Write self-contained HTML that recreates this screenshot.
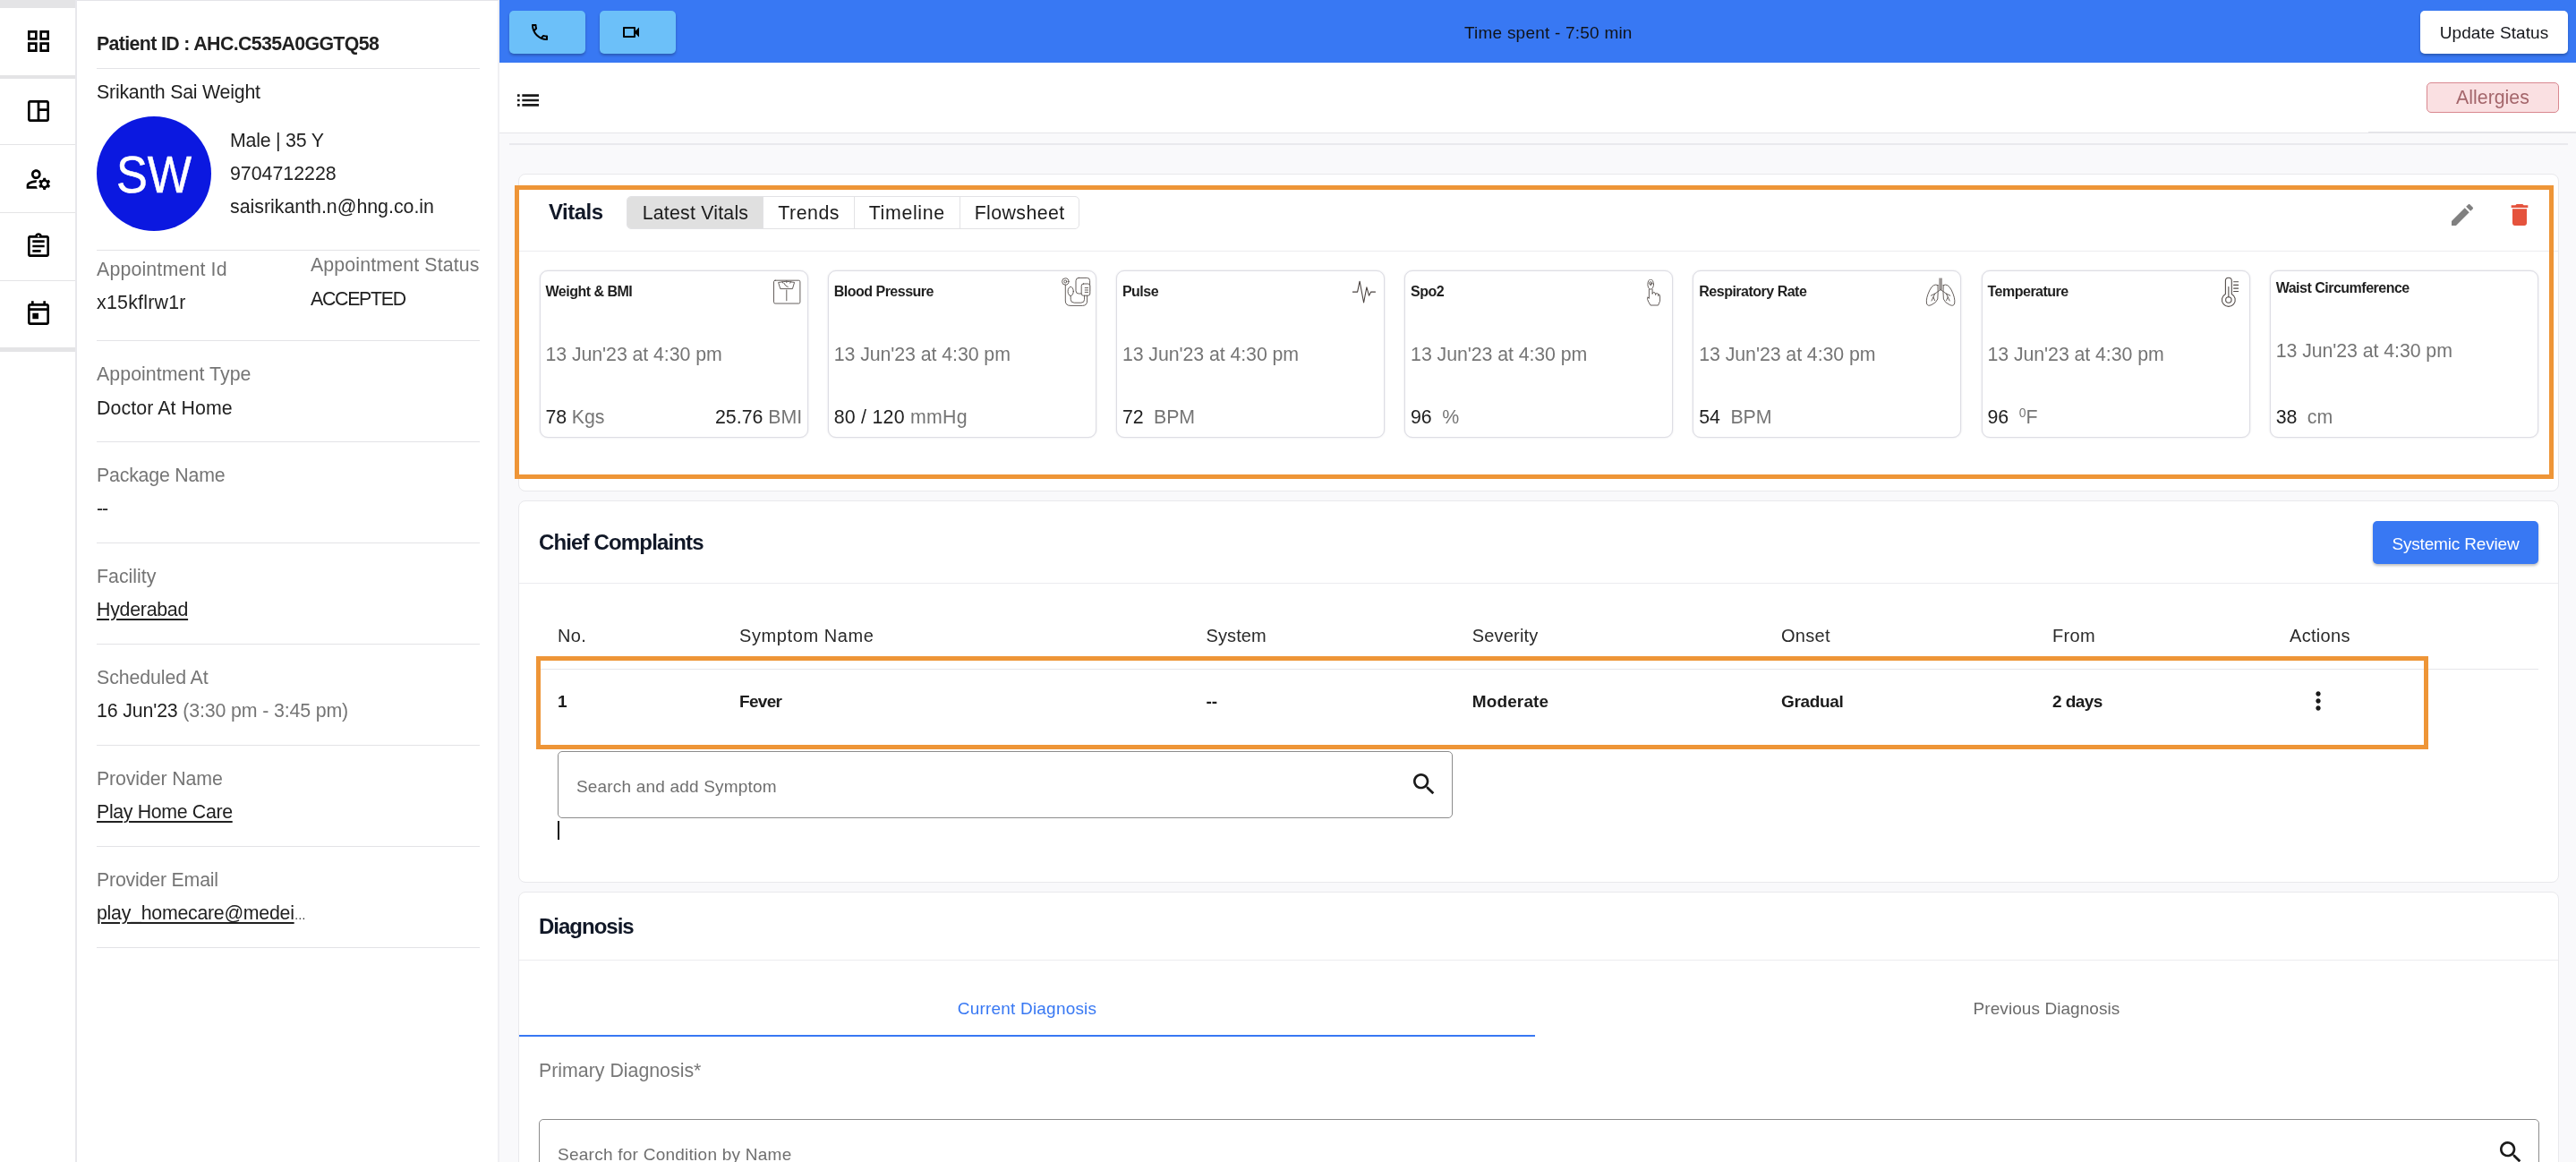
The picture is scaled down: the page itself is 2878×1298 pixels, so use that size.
<!DOCTYPE html>
<html>
<head>
<meta charset="utf-8">
<title>Consultation</title>
<style>
*{box-sizing:border-box;margin:0;padding:0}
html,body{width:2878px;height:1298px;overflow:hidden;background:#fff}
body{font-family:"Liberation Sans",sans-serif;color:#212121;position:relative}
#app{position:absolute;left:0;top:0;width:2878px;height:1298px;overflow:hidden;will-change:transform;background:#fff}
.abs{position:absolute}
.t{position:absolute;white-space:nowrap;line-height:1;font-size:21.33px}
.g{color:#757575}
.u{text-decoration:underline;text-decoration-thickness:1.5px;text-underline-offset:3px}
svg{position:absolute;display:block}
#rail{position:absolute;left:0;top:0;width:86px;height:1298px;background:#fff;border-right:2px solid #e8e8ec}
#rail .band{position:absolute;left:0;width:84px;background:#e4e4e6}
#rail .ln{position:absolute;left:0;width:84px;height:1px;background:#e4e4e6}
#panel{position:absolute;left:86px;top:0;width:472px;height:1298px;background:#fff;border-right:2px solid #f0f0f3;border-top:1px solid #e4e4e8}
.sep{position:absolute;left:108px;width:428px;height:1px;background:#e3e3e6}
#topbar{position:absolute;left:558px;top:0;width:2320px;height:70px;background:#3878f3}
.lb{position:absolute;top:12px;width:85px;height:48px;background:#6cc0f9;border-radius:5px;box-shadow:0 2px 3px rgba(0,0,0,.25)}
#toolbar{position:absolute;left:558px;top:70px;width:2320px;height:79px;background:#fff;border-bottom:1px solid #e6e6e9}
#content{position:absolute;left:558px;top:149px;width:2320px;height:1149px;background:#f9f9fb}
.card{position:absolute;background:#fff;border:1px solid #e9e9ec;border-radius:8px}
.hl{position:absolute;border:5px solid #ee9537}
.vc{position:absolute;top:302px;width:300px;height:187px;background:#fff;border:1.5px solid #dddde4;border-radius:9px;box-shadow:0 0 2px rgba(60,60,90,.18)}
.hr{position:absolute;height:1px;background:#ececef}
</style>
</head>
<body>
<div id="app">
<div id="rail">
<div class="band" style="top:0;height:9px"></div>
<div class="band" style="top:84px;height:4px"></div>
<div class="ln" style="top:161px"></div>
<div class="ln" style="top:237px"></div>
<div class="ln" style="top:313px"></div>
<div class="band" style="top:388px;height:5px"></div>
</div>
<svg style="left:26.7px;top:30px" width="32" height="32" viewBox="0 0 24 24" fill="#000"><path d="M3 3v8h8V3H3zm6 6H5V5h4v4zm-6 4v8h8v-8H3zm6 6H5v-4h4v4zm4-16v8h8V3h-8zm6 6h-4V5h4v4zm-6 4v8h8v-8h-8zm6 6h-4v-4h4v4z"/></svg>
<svg style="left:26.7px;top:108px" width="32" height="32" viewBox="0 0 24 24" fill="#000"><path d="M19 3H5c-1.1 0-2 .9-2 2v14c0 1.1.9 2 2 2h14c1.1 0 2-.9 2-2V5c0-1.1-.9-2-2-2zM5 19V5h6v14H5zm14 0h-6v-7h6v7zm0-9h-6V5h6v5z"/></svg>
<svg style="left:26.7px;top:184px" width="32" height="32" viewBox="0 0 24 24" fill="#000"><path d="M4 18v-.65c0-.34.16-.66.41-.81C6.1 15.53 8.03 15 10 15c.03 0 .05 0 .08.01.1-.7.3-1.37.59-1.98-.22-.02-.44-.03-.67-.03-2.42 0-4.68.67-6.61 1.82-.88.52-1.39 1.5-1.39 2.53V20h9.26c-.42-.6-.75-1.28-.97-2H4zM10 12c2.21 0 4-1.79 4-4s-1.79-4-4-4-4 1.79-4 4 1.79 4 4 4zm0-6c1.1 0 2 .9 2 2s-.9 2-2 2-2-.9-2-2 .9-2 2-2zM20.75 16c0-.22-.03-.42-.06-.63l1.14-1.01-1-1.73-1.45.49c-.32-.27-.68-.48-1.08-.63L18 11h-2l-.3 1.49c-.4.15-.76.36-1.08.63l-1.45-.49-1 1.73 1.14 1.01c-.03.21-.06.41-.06.63s.03.42.06.63l-1.14 1.01 1 1.73 1.45-.49c.32.27.68.48 1.08.63L16 21h2l.3-1.49c.4-.15.76-.36 1.08-.63l1.45.49 1-1.73-1.14-1.01c.03-.21.06-.41.06-.63zM17 18c-1.1 0-2-.9-2-2s.9-2 2-2 2 .9 2 2-.9 2-2 2z"/></svg>
<svg style="left:26.7px;top:259px" width="32" height="32" viewBox="0 0 24 24" fill="#000"><path d="M7 15h7v2H7zm0-4h10v2H7zm0-4h10v2H7zm12-4h-4.18C14.4 1.84 13.3 1 12 1c-1.3 0-2.4.84-2.82 2H5c-.14 0-.27.01-.4.04-.39.08-.74.28-1.01.55-.18.18-.33.4-.43.64-.1.23-.16.49-.16.77v14c0 .27.06.54.16.78s.25.45.43.64c.27.27.62.47 1.01.55.13.02.26.03.4.03h14c1.1 0 2-.9 2-2V5c0-1.1-.9-2-2-2zm-7-.25c.41 0 .75.34.75.75s-.34.75-.75.75-.75-.34-.75-.75.34-.75.75-.75zM19 19H5V5h14v14z"/></svg>
<svg style="left:26.7px;top:335px" width="32" height="32" viewBox="0 0 24 24" fill="#000"><path d="M19 3h-1V1h-2v2H8V1H6v2H5c-1.11 0-1.99.9-1.99 2L3 19c0 1.1.89 2 2 2h14c1.1 0 2-.9 2-2V5c0-1.1-.9-2-2-2zm0 16H5V9h14v10zm0-12H5V5h14v2zM7 11h5v5H7z"/></svg>
<div id="panel"></div>
<div class="t" style="left:108px;top:39px;letter-spacing:-0.63px;font-weight:700;">Patient ID : AHC.C535A0GGTQ58</div>
<div class="sep" style="top:76px"></div>
<div class="t" style="left:108px;top:93px;letter-spacing:-0.22px;">Srikanth Sai Weight</div>
<div class="abs" style="left:108px;top:130px;width:128px;height:128px;border-radius:50%;background:#0b18e0"></div>
<div class="t" style="left:108px;top:165.7px;font-size:58px;color:#fff;width:128px;text-align:center;transform:scaleX(.9);transform-origin:50% 50%;-webkit-text-stroke:.5px #fff;">SW</div>
<div class="t" style="left:257px;top:147px;letter-spacing:-0.22px;">Male | 35 Y</div>
<div class="t" style="left:257px;top:184px;">9704712228</div>
<div class="t" style="left:257px;top:221px;">saisrikanth.n@hng.co.in</div>
<div class="sep" style="top:279px"></div>
<div class="t g" style="left:108px;top:291px;letter-spacing:0.16px;">Appointment Id</div>
<div class="t" style="left:108px;top:328px;letter-spacing:0.25px;">x15kflrw1r</div>
<div class="t g" style="left:347px;top:286px;letter-spacing:0.14px;">Appointment Status</div>
<div class="t" style="left:347px;top:324px;letter-spacing:-1.3px;">ACCEPTED</div>
<div class="sep" style="top:380px"></div>
<div class="t g" style="left:108px;top:408px;letter-spacing:0.06px;">Appointment Type</div>
<div class="t" style="left:108px;top:446px;letter-spacing:0.09px;">Doctor At Home</div>
<div class="sep" style="top:493px"></div>
<div class="t g" style="left:108px;top:521px;letter-spacing:-0.2px;">Package Name</div>
<div class="t" style="left:108px;top:558px;letter-spacing:-1.2px;">--</div>
<div class="sep" style="top:606px"></div>
<div class="t g" style="left:108px;top:634px;letter-spacing:0px;">Facility</div>
<div class="t" style="left:108px;top:671px;letter-spacing:-0.25px;"><span class="u">Hyderabad</span></div>
<div class="sep" style="top:719px"></div>
<div class="t g" style="left:108px;top:747px;letter-spacing:-0.1px;">Scheduled At</div>
<div class="t" style="left:108px;top:784px;letter-spacing:-0.14px;">16 Jun'23 <span class="g">(3:30 pm - 3:45 pm)</span></div>
<div class="sep" style="top:832px"></div>
<div class="t g" style="left:108px;top:860px;letter-spacing:-0.12px;">Provider Name</div>
<div class="t" style="left:108px;top:897px;letter-spacing:-0.34px;"><span class="u">Play Home Care</span></div>
<div class="sep" style="top:945px"></div>
<div class="t g" style="left:108px;top:973px;letter-spacing:-0.2px;">Provider Email</div>
<div class="t" style="left:108px;top:1010px;letter-spacing:-0.26px;"><span class="u">play_homecare@medei</span><span style="font-size:13px;letter-spacing:0">&hellip;</span></div>
<div class="sep" style="top:1058px"></div>
<div id="content"></div>
<div id="topbar"></div>
<div class="lb" style="left:569px"></div>
<svg style="left:591.3px;top:23.8px" width="24" height="24" viewBox="0 0 24 24" fill="#000"><path d="M6.54 5c.06.89.21 1.76.45 2.59l-1.2 1.2c-.41-1.2-.67-2.47-.76-3.79h1.51m9.86 12.02c.85.24 1.72.39 2.6.45v1.49c-1.32-.09-2.59-.35-3.8-.75l1.2-1.19M7.5 3H4c-.55 0-1 .45-1 1 0 9.39 7.61 17 17 17 .55 0 1-.45 1-1v-3.49c0-.55-.45-1-1-1-1.24 0-2.45-.2-3.57-.57-.1-.04-.21-.05-.31-.05-.26 0-.51.1-.71.29l-2.2 2.2c-2.83-1.45-5.15-3.76-6.59-6.59l2.2-2.2c.28-.28.36-.67.25-1.02C8.7 6.45 8.5 5.25 8.5 4c0-.55-.45-1-1-1z"/></svg>
<div class="lb" style="left:670px"></div>
<svg style="left:692.7px;top:24px" width="24" height="24" viewBox="0 0 24 24" fill="#000"><path d="M15 8v8H5V8h10m1-2H4c-.55 0-1 .45-1 1v10c0 .55.45 1 1 1h12c.55 0 1-.45 1-1v-3.5l4 4v-11l-4 4V7c0-.55-.45-1-1-1z"/></svg>
<div class="t" style="left:1636px;top:27px;font-size:19px;letter-spacing:0.22px;color:#101318;">Time spent - 7:50 min</div>
<div class="abs" style="left:2704px;top:12px;width:165px;height:48px;background:#fff;border-radius:5px;box-shadow:0 2px 3px rgba(0,0,0,.25)"></div>
<div class="t" style="left:2704px;top:27px;font-size:19px;letter-spacing:0.1px;color:#15171c;width:165px;text-align:center;">Update Status</div>
<div id="toolbar"></div>
<svg style="left:574px;top:96px" width="32" height="32" viewBox="0 0 24 24" fill="#1a1a1a"><path d="M3 13h2v-2H3v2zm0 4h2v-2H3v2zm0-8h2V7H3v2zm4 4h14v-2H7v2zm0 4h14v-2H7v2zM7 7v2h14V7H7z"/></svg>
<div class="abs" style="left:2711px;top:92px;width:148px;height:34px;background:#fae0e2;border:1px solid #d98890;border-radius:5px"></div>
<div class="abs" style="left:2646px;top:147px;width:232px;height:1px;background:#e2e2e8"></div>
<div class="t" style="left:2711px;top:99px;color:#a4666b;width:148px;text-align:center;">Allergies</div>
<div class="abs" style="left:569px;top:160px;width:2300px;height:2px;background:#e9e9ed"></div>
<div class="card" style="left:579px;top:194px;width:2280px;height:355px"></div>
<div class="hr" style="left:580px;top:280px;width:2278px"></div>
<div class="t" style="left:613px;top:225px;font-size:24px;letter-spacing:-0.5px;font-weight:700;color:#111827;">Vitals</div>
<div class="abs" style="left:700px;top:219px;width:506px;height:37px;border:1px solid #e2e2e5;border-radius:5px;background:#fff;overflow:hidden"><div class="abs" style="left:0;top:0;width:151px;height:37px;background:#e0e0e0"></div><div class="abs" style="left:151px;top:0;width:1px;height:37px;background:#e2e2e5"></div><div class="abs" style="left:253px;top:0;width:1px;height:37px;background:#e2e2e5"></div><div class="abs" style="left:371px;top:0;width:1px;height:37px;background:#e2e2e5"></div></div>
<div class="t" style="left:717.7px;top:227.5px;letter-spacing:0.21px;color:#1c1c1c;">Latest Vitals</div>
<div class="t" style="left:869.2px;top:227.5px;letter-spacing:0.55px;color:#1c1c1c;">Trends</div>
<div class="t" style="left:970.7px;top:227.5px;letter-spacing:0.65px;color:#1c1c1c;">Timeline</div>
<div class="t" style="left:1088.7px;top:227.5px;letter-spacing:0.4px;color:#1c1c1c;">Flowsheet</div>
<svg style="left:2735px;top:224px" width="32" height="32" viewBox="0 0 24 24" fill="#808080"><path d="M3 17.25V21h3.75L17.81 9.94l-3.75-3.75L3 17.25zM20.71 7.04c.39-.39.39-1.02 0-1.41l-2.34-2.34c-.39-.39-1.02-.39-1.41 0l-1.83 1.83 3.75 3.75 1.83-1.83z"/></svg>
<svg style="left:2799px;top:224px" width="32" height="32" viewBox="0 0 24 24" fill="#e5533d"><path d="M6 19c0 1.1.9 2 2 2h8c1.1 0 2-.9 2-2V7H6v12zM19 4h-3.5l-1-1h-5l-1 1H5v2h14V4z"/></svg>
<div class="vc" style="left:602.5px"></div>
<div class="t" style="left:609.5px;top:317.5px;font-size:16px;letter-spacing:-0.5px;font-weight:700;color:#1f1f1f;">Weight &amp; BMI</div>
<div class="t g" style="left:609.5px;top:386px;letter-spacing:-0.07px;">13 Jun'23 at 4:30 pm</div>
<div class="t" style="left:609.5px;top:456px;letter-spacing:-0.1px;">78 <span class="g">Kgs</span></div>
<div class="vc" style="left:924.7px"></div>
<div class="t" style="left:931.7px;top:317.5px;font-size:16px;letter-spacing:-0.5px;font-weight:700;color:#1f1f1f;">Blood Pressure</div>
<div class="t g" style="left:931.7px;top:386px;letter-spacing:-0.07px;">13 Jun'23 at 4:30 pm</div>
<div class="t" style="left:931.7px;top:456px;letter-spacing:0.25px;">80 / 120 <span class="g">mmHg</span></div>
<div class="vc" style="left:1246.9px"></div>
<div class="t" style="left:1253.9px;top:317.5px;font-size:16px;letter-spacing:-0.5px;font-weight:700;color:#1f1f1f;">Pulse</div>
<div class="t g" style="left:1253.9px;top:386px;letter-spacing:-0.07px;">13 Jun'23 at 4:30 pm</div>
<div class="t" style="left:1253.9px;top:456px;letter-spacing:-0.1px;">72 <span class="g">&nbsp;BPM</span></div>
<div class="vc" style="left:1569.1px"></div>
<div class="t" style="left:1576.1px;top:317.5px;font-size:16px;letter-spacing:-0.5px;font-weight:700;color:#1f1f1f;">Spo2</div>
<div class="t g" style="left:1576.1px;top:386px;letter-spacing:-0.07px;">13 Jun'23 at 4:30 pm</div>
<div class="t" style="left:1576.1px;top:456px;letter-spacing:-0.1px;">96 <span class="g">&nbsp;%</span></div>
<div class="vc" style="left:1891.3px"></div>
<div class="t" style="left:1898.3px;top:317.5px;font-size:16px;letter-spacing:-0.5px;font-weight:700;color:#1f1f1f;">Respiratory Rate</div>
<div class="t g" style="left:1898.3px;top:386px;letter-spacing:-0.07px;">13 Jun'23 at 4:30 pm</div>
<div class="t" style="left:1898.3px;top:456px;letter-spacing:-0.1px;">54 <span class="g">&nbsp;BPM</span></div>
<div class="vc" style="left:2213.5px"></div>
<div class="t" style="left:2220.5px;top:317.5px;font-size:16px;letter-spacing:-0.5px;font-weight:700;color:#1f1f1f;">Temperature</div>
<div class="t g" style="left:2220.5px;top:386px;letter-spacing:-0.07px;">13 Jun'23 at 4:30 pm</div>
<div class="t" style="left:2220.5px;top:456px;letter-spacing:-0.1px;">96 <span class="g">&nbsp;<sup style="font-size:14px;vertical-align:7px;line-height:0">0</sup>F</span></div>
<div class="vc" style="left:2535.7px"></div>
<div class="t" style="left:2542.7px;top:313.5px;font-size:16px;letter-spacing:-0.5px;font-weight:700;color:#1f1f1f;">Waist Circumference</div>
<div class="t g" style="left:2542.7px;top:382px;letter-spacing:-0.07px;">13 Jun'23 at 4:30 pm</div>
<div class="t" style="left:2542.7px;top:456px;letter-spacing:-0.1px;">38 <span class="g">&nbsp;cm</span></div>
<div class="t" style="left:799px;top:456px;">25.76 <span class="g">BMI</span></div>
<svg style="left:862px;top:310px" width="36" height="32" viewBox="862 310 36 32" fill="none" stroke="#544d4a" stroke-width="0.9" stroke-linecap="round" stroke-linejoin="round"><rect x="864.5" y="313.2" width="29.4" height="25.8" rx="1.6"/><path d="M870 315.4Q878.8 313 887.6 315.4L885.4 322.6H872.2Z"/><path d="M878.8 324V335.8"/><path d="M874 314.6l.8 1.6M878.8 313.9v1.7M883.6 314.6l-.8 1.6M876 316.5Q877 319.6 880.3 320.6"/></svg>
<svg style="left:1184px;top:307px" width="38" height="38" viewBox="1184 307 38 38" fill="none" stroke="#544d4a" stroke-width="0.9" stroke-linecap="round" stroke-linejoin="round"><circle cx="1190.3" cy="314.5" r="3.7"/><circle cx="1190.3" cy="314.5" r="1.5"/><ellipse cx="1196.2" cy="325.4" rx="3.1" ry="5"/><rect x="1202" y="310.4" width="15.6" height="17.6" rx="3.2"/><rect x="1208.2" y="317" width="9.6" height="13.2" rx="2.2" fill="#fff"/><path d="M1212.2 321.6h3.4M1212.2 324h3.4M1212.2 326.4h3.4"/><path d="M1190.3 318.2V336Q1190.3 341.4 1196 341.4H1209.500Q1214.600 341.4 1214.600 336V330.2"/><path d="M1196.2 330.4V334.2Q1196.2 338.2 1200.2 338.2H1207.800Q1211.600 338.2 1211.600 334.4V330.2"/></svg>
<svg style="left:1509px;top:311px" width="30" height="30" viewBox="1509 311 30 30" fill="none" stroke="#4a4340" stroke-width="1.1" stroke-linecap="round" stroke-linejoin="round"><path d="M1511.4 326.1H1516.600L1519.1 314.2 1523.600 338 1526.900 320.8 1529.500 330.2 1531.700 326.1H1536.500"/></svg>
<svg style="left:1837px;top:312px" width="22" height="32" viewBox="1837 312 22 32" fill="none" stroke="#544d4a" stroke-width="0.9" stroke-linecap="round" stroke-linejoin="round"><ellipse cx="1844.2" cy="317.6" rx="3.3" ry="5.6"/><circle cx="1844.2" cy="316.400" r="1.6"/><path d="M1844.2 316.4v2.4"/><path d="M1842.4 323.2V333.4L1840.900 331.8Q1839.800 334.2 1841.800 337.200L1844 341H1852.600L1854.600 336.200V330.600Q1854.600 328.900 1852.900 328.900V330.800M1852.900 329.400Q1852.900 327.600 1851.100 327.600 1849.500 327.600 1849.500 329.400M1849.500 328.400Q1849.500 326.500 1847.800 326.500 1846.100 326.500 1846.100 328.400V323.200"/></svg>
<svg style="left:2149px;top:308px" width="38" height="36" viewBox="2149 308 38 36" fill="none" stroke="#544d4a" stroke-width="0.9" stroke-linecap="round" stroke-linejoin="round"><rect x="2166.3" y="310.6" width="3.6" height="13.2" fill="#9a9593" stroke="none"/><path d="M2165 318.6Q2160 316 2156 324 2151.500 333 2152.500 339 2153.500 342.600 2158 340.500 2163.500 338 2164.800 334 2165.500 327 2165 318.600Z"/><path d="M2171.2 318.600Q2176.200 316 2180.200 324 2184.700 333 2183.700 339 2182.700 342.600 2178.200 340.500 2172.700 338 2171.400 334 2170.700 327 2171.200 318.600Z"/><path d="M2168.1 323.600L2161.800 328 2158 336M2161.800 328L2157.400 330.200M2160 332L2161.600 335.600M2168.1 323.600L2174.400 328 2178.200 336M2174.400 328L2178.800 330.200M2176.200 332L2174.600 335.600"/></svg>
<svg style="left:2479px;top:307px" width="26" height="38" viewBox="2479 307 26 38" fill="none" stroke="#544d4a" stroke-width="1.1" stroke-linecap="round" stroke-linejoin="round"><path d="M2486.400 313.600a3.450 3.450 0 0 1 6.900 0V328.400a7.400 7.400 0 1 1 -6.900 0Z"/><circle cx="2489.850" cy="335" r="3.2"/><path d="M2489.850 320.600V331.800"/><path d="M2495.600 314.800h5M2495.600 318.400h5M2495.600 322.100h5M2495.600 325.500h5"/></svg>
<div class="hl" style="left:575px;top:207px;width:2278px;height:328px"></div>
<div class="card" style="left:579px;top:559px;width:2280px;height:427px"></div>
<div class="hr" style="left:580px;top:651px;width:2278px"></div>
<div class="t" style="left:602px;top:594px;font-size:24px;letter-spacing:-0.85px;font-weight:700;color:#111827;">Chief Complaints</div>
<div class="abs" style="left:2651px;top:582px;width:185px;height:48px;background:#3878f3;border-radius:5px;box-shadow:0 2px 3px rgba(0,0,0,.25)"></div>
<div class="t" style="left:2651px;top:597.5px;font-size:19px;letter-spacing:-0.17px;color:#fff;width:185px;text-align:center;">Systemic Review</div>
<div class="t" style="left:623px;top:700px;font-size:20px;letter-spacing:0.3px;color:#2a2a2a;">No.</div>
<div class="t" style="left:826px;top:700px;font-size:20px;letter-spacing:0.6px;color:#2a2a2a;">Symptom Name</div>
<div class="t" style="left:1347.5px;top:700px;font-size:20px;letter-spacing:0.1px;color:#2a2a2a;">System</div>
<div class="t" style="left:1644.7px;top:700px;font-size:20px;letter-spacing:0.2px;color:#2a2a2a;">Severity</div>
<div class="t" style="left:1990px;top:700px;font-size:20px;letter-spacing:0.3px;color:#2a2a2a;">Onset</div>
<div class="t" style="left:2293px;top:700px;font-size:20px;letter-spacing:0.3px;color:#2a2a2a;">From</div>
<div class="t" style="left:2558px;top:700px;font-size:20px;letter-spacing:0.3px;color:#2a2a2a;">Actions</div>
<div class="abs" style="left:602px;top:747px;width:2234px;height:1px;background:#e6e6ea"></div>
<div class="t" style="left:623px;top:774px;font-size:19px;letter-spacing:0px;font-weight:700;color:#1c1c1c;">1</div>
<div class="t" style="left:826px;top:774px;font-size:19px;letter-spacing:-0.7px;font-weight:700;color:#1c1c1c;">Fever</div>
<div class="t" style="left:1347.5px;top:774px;font-size:19px;letter-spacing:0px;font-weight:700;color:#1c1c1c;">--</div>
<div class="t" style="left:1644.7px;top:774px;font-size:19px;letter-spacing:0.14px;font-weight:700;color:#1c1c1c;">Moderate</div>
<div class="t" style="left:1990px;top:774px;font-size:19px;letter-spacing:-0.33px;font-weight:700;color:#1c1c1c;">Gradual</div>
<div class="t" style="left:2293px;top:774px;font-size:19px;letter-spacing:-0.55px;font-weight:700;color:#1c1c1c;">2 days</div>
<svg style="left:2574px;top:767px" width="32" height="32" viewBox="0 0 24 24" fill="#1a1a1a"><path d="M12 8c1.1 0 2-.9 2-2s-.9-2-2-2-2 .9-2 2 .9 2 2 2zm0 2c-1.1 0-2 .9-2 2s.9 2 2 2 2-.9 2-2-.9-2-2-2zm0 6c-1.1 0-2 .9-2 2s.9 2 2 2 2-.9 2-2-.9-2-2-2z"/></svg>
<div class="hl" style="left:599px;top:733px;width:2114px;height:104px"></div>
<div class="abs" style="left:623px;top:839px;width:1000px;height:75px;border:1px solid #8c8c8c;border-radius:5px;background:#fff"></div>
<div class="t" style="left:644px;top:868.7px;font-size:19px;letter-spacing:0.18px;color:#6f6f6f;">Search and add Symptom</div>
<svg style="left:1575px;top:860px" width="32" height="32" viewBox="0 0 24 24" fill="#1a1a1a"><path d="M15.5 14h-.79l-.28-.27C15.41 12.59 16 11.11 16 9.5 16 5.91 13.09 3 9.5 3S3 5.91 3 9.5 5.91 16 9.5 16c1.61 0 3.09-.59 4.23-1.57l.27.28v.79l5 4.99L20.49 19l-4.99-5zm-6 0C7.01 14 5 11.99 5 9.5S7.01 5 9.5 5 14 7.01 14 9.5 11.99 14 9.5 14z"/></svg>
<div class="abs" style="left:623px;top:916.5px;width:2px;height:21px;background:#111"></div>
<div class="card" style="left:579px;top:996px;width:2280px;height:340px"></div>
<div class="hr" style="left:580px;top:1072px;width:2278px"></div>
<div class="t" style="left:602px;top:1023px;font-size:24px;letter-spacing:-1.0px;font-weight:700;color:#111827;">Diagnosis</div>
<div class="t" style="left:580px;top:1117px;font-size:19px;letter-spacing:0.2px;color:#3878f3;width:1135px;text-align:center;">Current Diagnosis</div>
<div class="t" style="left:1715px;top:1117px;font-size:19px;letter-spacing:0.07px;color:#6b6b6b;width:1143px;text-align:center;">Previous Diagnosis</div>
<div class="abs" style="left:580px;top:1156px;width:1135px;height:2px;background:#3878f3"></div>
<div class="t" style="left:602px;top:1186px;color:#777;">Primary Diagnosis*</div>
<div class="abs" style="left:602px;top:1250px;width:2235px;height:80px;border:1px solid #8c8c8c;border-radius:5px;background:#fff"></div>
<div class="t" style="left:623px;top:1280px;font-size:19px;letter-spacing:0.25px;color:#6f6f6f;">Search for Condition by Name</div>
<svg style="left:2789px;top:1271px" width="32" height="32" viewBox="0 0 24 24" fill="#1a1a1a"><path d="M15.5 14h-.79l-.28-.27C15.41 12.59 16 11.11 16 9.5 16 5.91 13.09 3 9.5 3S3 5.91 3 9.5 5.91 16 9.5 16c1.61 0 3.09-.59 4.23-1.57l.27.28v.79l5 4.99L20.49 19l-4.99-5zm-6 0C7.01 14 5 11.99 5 9.5S7.01 5 9.5 5 14 7.01 14 9.5 11.99 14 9.5 14z"/></svg>
</div>
</body>
</html>
